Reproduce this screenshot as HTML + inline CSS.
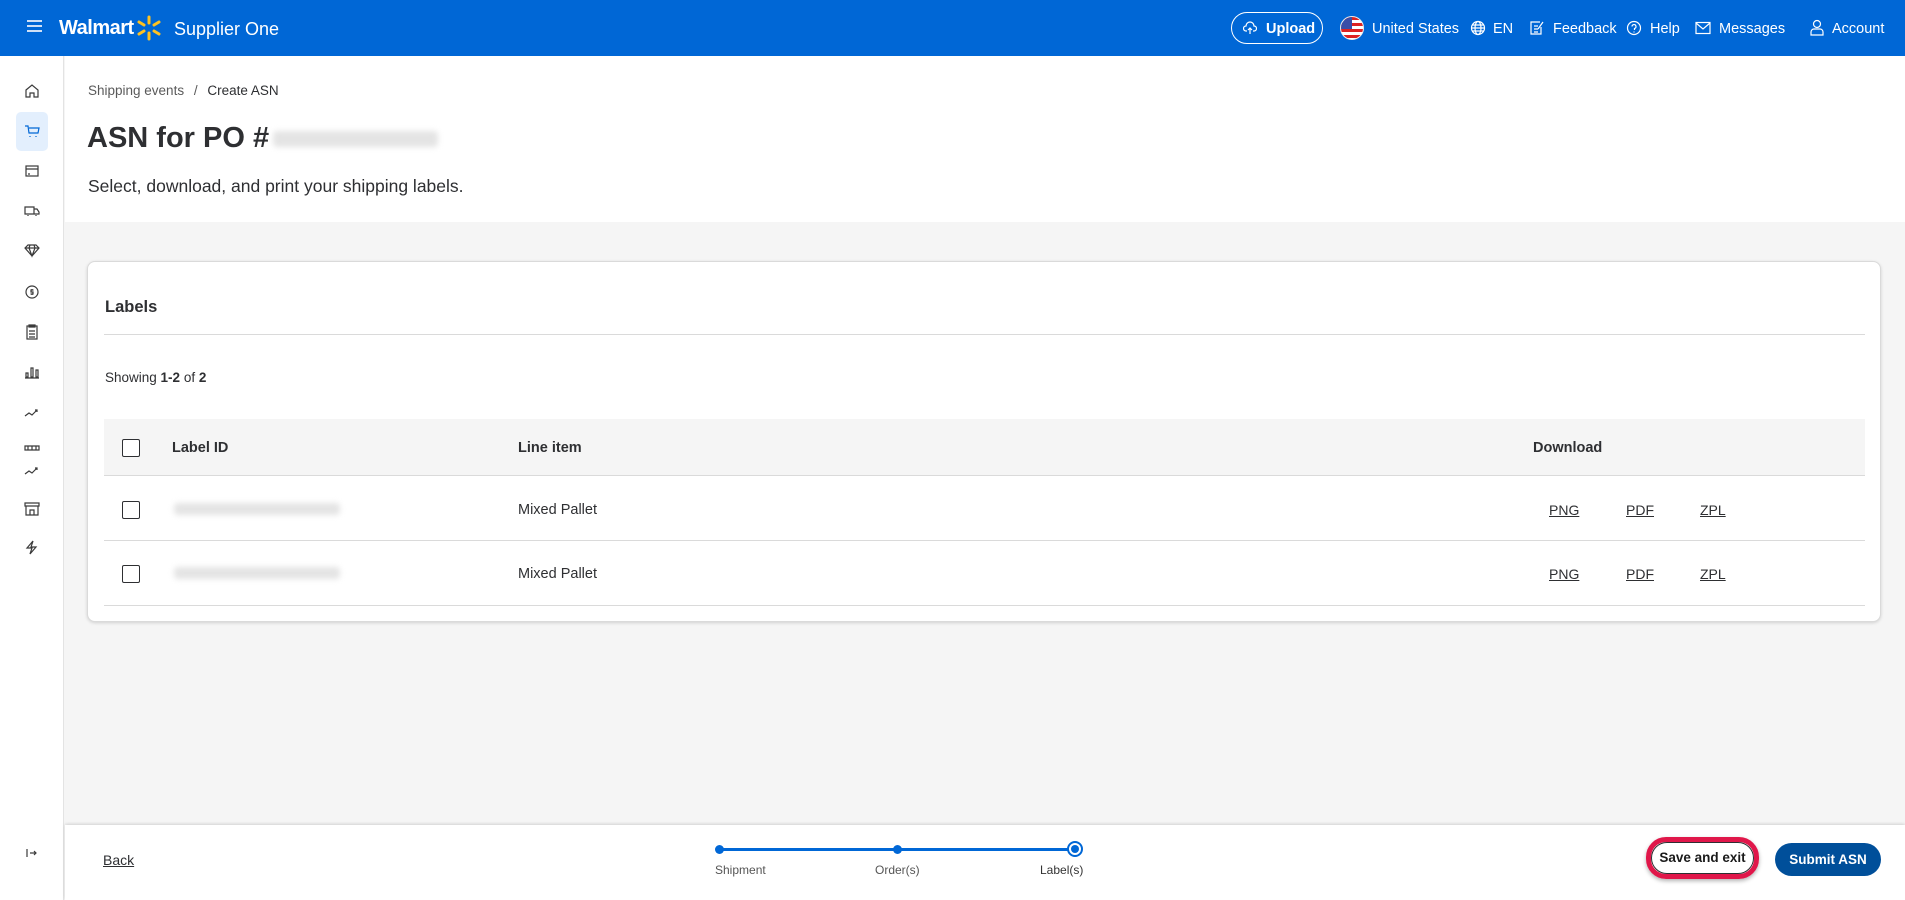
<!DOCTYPE html>
<html><head><meta charset="utf-8"><style>
*{box-sizing:border-box;margin:0;padding:0}
body{width:1905px;height:900px;position:relative;overflow:hidden;font-family:"Liberation Sans",sans-serif;color:#2e2f32;background:#f5f5f5}
.a{position:absolute;white-space:nowrap}
.hdr{position:absolute;left:0;top:0;width:1905px;height:56px;background:#0067d6;color:#fff}
.hdr .a{font-size:14.5px;line-height:18px}
.side{position:absolute;left:0;top:56px;width:64px;height:844px;background:#fff;border-right:1px solid #e3e3e3}
.top{position:absolute;left:65px;top:56px;width:1840px;height:166px;background:#fff}
.card{position:absolute;left:87px;top:261px;width:1794px;height:361px;background:#fff;border:1px solid #dadada;border-radius:8px;box-shadow:0 1px 3px rgba(0,0,0,.15)}
.foot{position:absolute;left:65px;top:825px;width:1840px;height:75px;background:#fff;box-shadow:0 -1px 3px rgba(0,0,0,.15)}
.cb{position:absolute;width:18px;height:18px;border:1.5px solid #2e2f32;border-radius:2px;background:#fff}
.blur{position:absolute;height:12px;background:#e4e4e4;filter:blur(3px);border-radius:4px}
.lnk{text-decoration:underline;font-size:14px}
svg{position:absolute}
</style></head><body>
<div class="hdr">
 <div class="a" style="left:27px;top:20px;width:15px;height:2px;background:#cfe0f6;box-shadow:0 5px 0 #cfe0f6,0 10px 0 #cfe0f6"></div>
 <div class="a" style="left:59px;top:16px;font-size:20px;line-height:24px;font-weight:bold;letter-spacing:-.5px">Walmart</div>
 <svg style="left:136px;top:15px" width="26" height="26" viewBox="0 0 26 26"><g stroke="#ffc220" stroke-width="3" stroke-linecap="round"><line x1="13" y1="2" x2="13" y2="8"/><line x1="13" y1="18" x2="13" y2="24"/><line x1="3" y1="7" x2="8" y2="10"/><line x1="18" y1="16" x2="23" y2="19"/><line x1="3" y1="19" x2="8" y2="16"/><line x1="18" y1="10" x2="23" y2="7"/></g></svg>
 <div class="a" style="left:174px;top:18px;font-size:18px;line-height:22px">Supplier One</div>
 <div class="a" style="left:1231px;top:12px;width:92px;height:32px;border:1.5px solid #fff;border-radius:16px"></div>
 <svg style="left:1243px;top:21px" width="14" height="14" viewBox="0 0 14 14" fill="none" stroke="#fff" stroke-width="1.2"><path d="M4 10H3a2.5 2.5 0 0 1 0-5 4 4 0 0 1 8 0 2.5 2.5 0 0 1 0 5h-1M7 13V7M5 9l2-2 2 2"/></svg>
 <div class="a" style="left:1266px;top:20px;font-weight:bold">Upload</div>
 <div class="a" style="left:1340px;top:16px;width:24px;height:24px;border-radius:50%;background:repeating-linear-gradient(#d22 0 3px,#fff 3px 6px);overflow:hidden;border:1px solid #eee"><div style="width:11px;height:12px;background:#3a4ea8"></div></div>
 <div class="a" style="left:1372px;top:20px">United States</div>
 <svg style="left:1470px;top:20px" width="16" height="16" viewBox="0 0 16 16" fill="none" stroke="#fff" stroke-width="1.2"><circle cx="8" cy="8" r="6.5"/><ellipse cx="8" cy="8" rx="3" ry="6.5"/><path d="M1.5 8h13M2.5 5h11M2.5 11h11"/></svg>
 <div class="a" style="left:1493px;top:20px">EN</div>
 <svg style="left:1529px;top:20px" width="16" height="16" viewBox="0 0 16 16" fill="none" stroke="#fff" stroke-width="1.2"><path d="M11 2H2v12h10V7M5 6h4M5 9h4M5 12h4M9 9l5-7"/></svg>
 <div class="a" style="left:1553px;top:20px">Feedback</div>
 <svg style="left:1626px;top:20px" width="16" height="16" viewBox="0 0 16 16" fill="none" stroke="#fff" stroke-width="1.2"><circle cx="8" cy="8" r="6.5"/><path d="M6 6.5a2 2 0 1 1 2.5 2V10M8 11.5v1"/></svg>
 <div class="a" style="left:1650px;top:20px">Help</div>
 <svg style="left:1695px;top:21px" width="16" height="14" viewBox="0 0 16 14" fill="none" stroke="#fff" stroke-width="1.2"><rect x="1" y="1.5" width="14" height="11"/><path d="M1 2l7 6 7-6"/></svg>
 <div class="a" style="left:1719px;top:20px">Messages</div>
 <svg style="left:1810px;top:19px" width="14" height="17" viewBox="0 0 14 17" fill="none" stroke="#fff" stroke-width="1.2"><circle cx="7" cy="5" r="3.5"/><path d="M1 16v-3a3 3 0 0 1 3-3h6a3 3 0 0 1 3 3v3z"/></svg>
 <div class="a" style="left:1832px;top:20px">Account</div>
</div>
<div class="side">
 <div class="a" style="left:16px;top:56px;width:32px;height:39px;background:#e3effd;border-radius:5px"></div>
 <svg style="left:0;top:0" width="64" height="844" viewBox="0 0 64 844" fill="none" stroke="#3a3a3a" stroke-width="1.2">
  <path d="M26 34l6-5 6 5v7h-4v-4h-4v4h-4z"/>
  <path d="M25 70h3l1 7h9l1-5h-10M30 80v1M36 80v1" stroke="#0067d6"/>
  <rect x="26" y="110" width="12" height="10"/><path d="M26 113h12M28 118h2"/>
  <path d="M25 151h9v7h-9zM34 153h3l2 3v2h-5M28 159v1M36 159v1"/>
  <path d="M25 192l3-3h8l3 3-7 8zM25 192h14M30 189l-1 3 3 8 3-8-1-3"/>
  <circle cx="32" cy="236" r="6"/><path d="M33.5 234h-2.5v2h2v2h-2.5M32 233v1M32 238v1"/>
  <rect x="27" y="270" width="10" height="13"/><path d="M29 269h6v2h-6zM29 275h6M29 278h6M29 281h6"/>
  <path d="M26 321v-4h2v4zM31 321v-9h2v9zM36 321v-7h2v7zM25 322h14"/>
  <path d="M25 360l4-3 3 2 5-5M35 354h2v2"/>
  <path d="M25 394v-4h14v4zM28 390v4M32 390v4M36 390v4"/>
  <path d="M25 418l4-3 3 2 5-5M35 412h2v2"/>
  <path d="M25 450h14v-3H25zM26 450v9h12v-9M30 459v-5h4v5"/>
  <path d="M33 485l-6 7h5l-2 6 6-7h-5z"/>
  <path d="M27 793v8M30 797h6M34 795l2 2-2 2"/>
 </svg>
</div>
<div class="top">
 <div class="a" style="left:23px;top:27px;font-size:13.5px;color:#5a5a5a">Shipping events <span style="margin:0 6px">/</span> <span style="color:#2e2f32">Create ASN</span></div>
 <div class="a" style="left:22px;top:64px;font-size:29px;font-weight:bold;line-height:36px">ASN for PO #</div>
 <div class="blur" style="left:208px;top:75px;width:165px;height:16px"></div>
 <div class="a" style="left:23px;top:120px;font-size:17.5px;line-height:20px">Select, download, and print your shipping labels.</div>
</div>
<div class="card">
 <div class="a" style="left:17px;top:36px;font-size:16.5px;font-weight:bold">Labels</div>
 <div class="a" style="left:16px;top:72px;width:1761px;height:1px;background:#dadada"></div>
 <div class="a" style="left:17px;top:108px;font-size:13.5px">Showing <b>1-2</b> of <b>2</b></div>
 <div class="a" style="left:16px;top:157px;width:1761px;height:57px;background:#f5f5f5;border-bottom:1px solid #dadada"></div>
 <div class="cb" style="left:34px;top:177px"></div>
 <div class="a" style="left:84px;top:178px;font-size:14.5px;font-weight:bold">Label ID</div>
 <div class="a" style="left:430px;top:178px;font-size:14.5px;font-weight:bold">Line item</div>
 <div class="a" style="left:1445px;top:178px;font-size:14.5px;font-weight:bold">Download</div>
 <div class="cb" style="left:34px;top:239px"></div>
 <div class="blur" style="left:86px;top:241px;width:166px"></div>
 <div class="a" style="left:430px;top:240px;font-size:14.5px">Mixed Pallet</div>
 <div class="a lnk" style="left:1461px;top:240px">PNG</div><div class="a lnk" style="left:1538px;top:240px">PDF</div><div class="a lnk" style="left:1612px;top:240px">ZPL</div>
 <div class="a" style="left:16px;top:278px;width:1761px;height:1px;background:#dadada"></div>
 <div class="cb" style="left:34px;top:303px"></div>
 <div class="blur" style="left:86px;top:305px;width:166px"></div>
 <div class="a" style="left:430px;top:304px;font-size:14.5px">Mixed Pallet</div>
 <div class="a lnk" style="left:1461px;top:304px">PNG</div><div class="a lnk" style="left:1538px;top:304px">PDF</div><div class="a lnk" style="left:1612px;top:304px">ZPL</div>
 <div class="a" style="left:16px;top:343px;width:1761px;height:1px;background:#dadada"></div>
</div>
<div class="foot">
 <div class="a lnk" style="left:38px;top:27px;font-size:14px">Back</div>
 <div class="a" style="left:656px;top:23px;width:354px;height:3px;background:#0067d6"></div>
 <div class="a" style="left:650px;top:20px;width:9px;height:9px;border-radius:50%;background:#0067d6"></div>
 <div class="a" style="left:828px;top:20px;width:9px;height:9px;border-radius:50%;background:#0067d6"></div>
 <div class="a" style="left:1002px;top:16px;width:16px;height:16px;border-radius:50%;border:2px solid #0067d6;background:#fff"><div style="margin:2px;width:8px;height:8px;border-radius:50%;background:#0067d6"></div></div>
 <div class="a" style="left:650px;top:38px;font-size:12px;color:#555">Shipment</div>
 <div class="a" style="left:810px;top:38px;font-size:12px;color:#555">Order(s)</div>
 <div class="a" style="left:975px;top:38px;font-size:12px;color:#333">Label(s)</div>
 <div class="a" style="left:1581px;top:12px;width:113px;height:42px;border:5px solid #e0174a;border-radius:20px;box-shadow:0 2px 4px rgba(0,0,0,.3)"><div style="width:100%;height:100%;border:1px solid #2e2f32;border-radius:16px;background:#fff;font-size:13.5px;font-weight:bold;text-align:center;line-height:30px;color:#1a1a1a">Save and exit</div></div>
 <div class="a" style="left:1710px;top:18px;width:106px;height:33px;border-radius:17px;background:#004f9a;color:#fff;font-size:13.5px;font-weight:bold;text-align:center;line-height:33px">Submit ASN</div>
</div>
</body></html>
